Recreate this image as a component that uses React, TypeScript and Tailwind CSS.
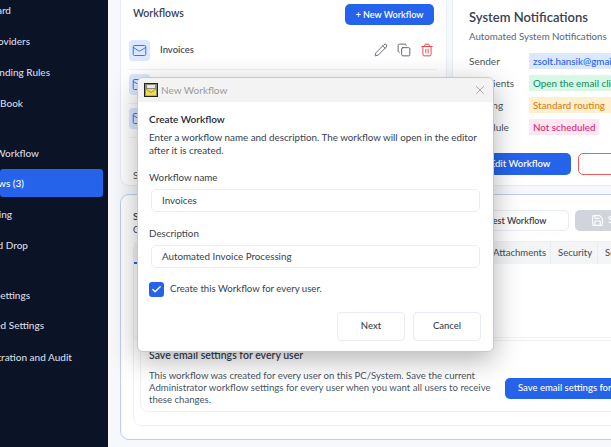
import { Check, Copy, Mail, Pencil, Save, Trash2, X } from 'lucide-react';

const font = { fontFamily: 'Lato, sans-serif' };

const sidebarItems = [
    { label: 'Dashboard', pad: 'pr-[92px]', top: 'mt-0' },
    { label: 'Email Providers', pad: 'pr-[73px]', top: 'mt-[15px]' },
    { label: 'Sending Rules', pad: 'pr-[53px]', top: 'mt-[15px]' },
    { label: 'Address Book', pad: 'pr-[80px]', top: 'mt-[15px]' },
    { label: 'New Workflow', pad: 'pr-[64px]', top: 'mt-[34px]' },
    { label: 'Workflows (3)', pad: 'pr-[79px]', top: 'mt-[8px]', active: true },
    { label: 'Scheduling', pad: 'pr-[91px]', top: 'mt-[9px]' },
    { label: 'Drag and Drop', pad: 'pr-[75px]', top: 'mt-[15px]' },
    { label: 'Settings', pad: 'pr-[73px]', top: 'mt-[34px]' },
    { label: 'Advanced Settings', pad: 'pr-[59px]', top: 'mt-[14px]' },
    { label: 'Administration and Audit', pad: 'pr-[31px]', top: 'mt-[16px]' },
];

const Sidebar = () => (
    <div className="w-[108px] shrink-0 overflow-hidden bg-[#0b1426] pt-[2px] pr-[5px] text-[10px] font-medium text-[#d5dbe6]">
        {sidebarItems.map((item) => (
            <div
                key={item.label}
                className={`flex justify-end whitespace-nowrap rounded-[3px] leading-[16px] ${item.top} ${item.pad} ${
                    item.active ? 'bg-[#2563eb] py-[6px] text-white' : ''
                }`}
            >
                {item.label}
            </div>
        ))}
    </div>
);

const WorkflowRow = ({ name }: { name: string }) => (
    <div className="flex h-[34px] items-center border-b border-[#f0f2f6] pb-[5px]">
        <div className="flex h-[21px] w-[21px] items-center justify-center rounded-[4px] bg-[#dbe8fe]">
            <Mail size={15} className="text-[#3b74f0]" strokeWidth={1.6} />
        </div>
        <span className="ml-[10px] flex-1 pt-[1px] text-[9.5px] font-medium text-[#374151]">{name}</span>
        <div className="flex items-center gap-[9px] pr-[3px]">
            <Pencil size={14} strokeWidth={1.5} className="text-[#4b5563]" />
            <Copy size={14} strokeWidth={1.5} className="text-[#4b5563]" />
            <Trash2 size={14} strokeWidth={1.6} className="text-[#e53e3e]" />
        </div>
    </div>
);

const WorkflowsCard = () => (
    <div className="h-[214px] w-[327px] shrink-0 rounded-b-[9px] border border-[#e8ecf4] bg-white px-[8px] pt-[31px]">
        <div className="flex items-start justify-between pl-[4px] pr-[4px]">
            <span className="text-[10.5px] leading-[18px] font-semibold text-[#374151]">Workflows</span>
            <button className="h-[21px] w-[89px] rounded-[5px] bg-[#2563eb] text-[9px] font-semibold text-white">
                + New Workflow
            </button>
        </div>
        <div className="mt-[11px] w-[308px]">
            <WorkflowRow name="Invoices" />
            <WorkflowRow name="Reports" />
            <WorkflowRow name="Orders" />
        </div>
        <div className="mt-[30px] pl-[4px] text-[10px] text-[#4b5563]">Select a workflow</div>
    </div>
);

const notifications = [
    { label: 'Sender', value: 'zsolt.hansik@gmail.com', tone: 'bg-[#dbe8fe] text-[#2563eb]' },
    { label: 'Recipients', value: 'Open the email client', tone: 'bg-[#d9f7e6] text-[#15935f]' },
    { label: 'Routing', value: 'Standard routing', tone: 'bg-[#fef0cf] text-[#dd7f18] pr-[30px]' },
    { label: 'Schedule', value: 'Not scheduled', tone: 'bg-[#fde7f1] text-[#db2777]' },
];

const NotificationsCard = () => (
    <div className="h-[214px] w-[260px] shrink-0 rounded-b-[9px] border border-[#e8ecf4] bg-white pl-[16px] pt-[34px]">
        <div className="text-[13px] leading-[20px] font-semibold text-[#374151]">System Notifications</div>
        <div className="mt-[1px] whitespace-nowrap text-[9.7px] leading-[16px] text-[#5b6472]">
            Automated System Notifications
        </div>
        <div className="mt-[9px] flex flex-col gap-[6px]">
            {notifications.map((n) => (
                <div key={n.label} className="flex items-center">
                    <span className="w-[60px] text-[10px] text-[#4b5563]">{n.label}</span>
                    <span className={`h-[16px] whitespace-nowrap px-[4px] text-[9.8px] leading-[16px] font-medium ${n.tone}`}>
                        {n.value}
                    </span>
                </div>
            ))}
        </div>
        <div className="mt-[18px] flex gap-[7px]">
            <button className="h-[22px] w-[102px] rounded-[5px] bg-[#2563eb] text-[9.5px] font-semibold text-white">
                Edit Workflow
            </button>
            <button className="flex h-[22px] w-[80px] items-center justify-center rounded-[5px] border border-[#ef5b5b] bg-white">
                <Trash2 size={13} className="text-[#e53e3e]" />
            </button>
        </div>
    </div>
);

const EditorCard = () => (
    <div className="mt-[8px] h-[246px] w-[526px] rounded-[9px] border border-[#bccff6] bg-white pl-[12px] pt-[15px]">
        <div className="flex h-[26px] items-start justify-between">
            <div className="text-[10px] leading-[13px] text-[#374151]">
                <div className="font-semibold">System</div>
                <div className="text-[9px]">Configure</div>
            </div>
            <div className="flex gap-[6px]">
                <button className="h-[21px] w-[100px] rounded-[5px] border border-[#e8ecf4] bg-white pr-[3px] text-[9px] font-semibold text-[#374151]">
                    Test Workflow
                </button>
                <button className="flex h-[21px] w-[70px] items-center gap-[4px] rounded-[5px] bg-[#d1d5db] pl-[16px] text-[9.5px] font-semibold text-white">
                    <Save size={13} />
                    Save
                </button>
            </div>
        </div>
        <div className="mt-[5px] h-[185px] w-[520px] rounded-[8px] border border-[#eef0f5]">
            <div className="flex h-[22px] items-center bg-[#f4f5f7] text-[9.5px] font-medium text-[#4b5563]">
                <span className="h-[22px] w-[60px] border-b-2 border-[#2563eb] pt-[4px] pl-[10px]">General</span>
                <span className="ml-[299px] w-[57px]">Attachments</span>
                <span className="w-[47px] border-l border-[#e8ecf4] pl-[7px] leading-[22px]">Security</span>
                <span className="w-[35px] border-l border-[#e8ecf4] pl-[7px] leading-[22px]">Send</span>
            </div>
            <div className="h-[74px] border-b border-[#eef0f5]" />
            <div className="ml-[6px] mt-[2px] h-[72px] rounded-b-[8px] border border-[#eef0f5] pl-[8px] pt-[7px]">
                <div className="text-[10.5px] leading-[14px] font-semibold text-[#374151]">
                    Save email settings for every user
                </div>
                <div className="mt-[8px] flex items-center">
                    <p className="w-[356px] shrink-0 pr-[12px] text-[9.6px] leading-[12px] text-[#4b5563]">
                        This workflow was created for every user on this PC/System. Save the current Administrator
                        workflow settings for every user when you want all users to receive these changes.
                    </p>
                    <button className="h-[21px] w-[140px] shrink-0 whitespace-nowrap rounded-[5px] bg-[#2563eb] pl-[13px] text-left text-[9.5px] font-medium text-white">
                        Save email settings for every user
                    </button>
                </div>
            </div>
        </div>
    </div>
);

const Dialog = () => (
    <div className="absolute left-[137px] top-[77px] h-[275px] w-[357px] overflow-hidden rounded-[6px] border border-[#c9c9c9] bg-white shadow-[0_8px_28px_rgba(0,0,0,0.3)]">
        <div className="flex h-[24px] items-center bg-[#f3f3f3] pl-[6px] pr-[6px]">
            <svg width="14" height="14" viewBox="0 0 14 14">
                <rect x="0.5" y="0.5" width="13" height="13" fill="#8c8c7a" stroke="#222" />
                <rect x="2" y="6" width="10" height="6.5" fill="#f0dc5a" />
                <path d="M2 6l5 3.5L12 6" fill="none" stroke="#a8962e" strokeWidth="1" />
                <rect x="3" y="2" width="8" height="3" fill="#e8e8e8" />
            </svg>
            <span className="ml-[3px] flex-1 text-[10px] text-[#9a9a9a]">New Workflow</span>
            <X size={14} strokeWidth={1.2} className="text-[#8a8a8a]" />
        </div>
        <div className="px-[11px] pt-[10px]">
            <div className="text-[10px] leading-[14px] font-semibold text-[#1f2937]">Create Workflow</div>
            <p className="mt-[5px] text-[9.8px] leading-[13px] text-[#374151]">
                Enter a workflow name and description. The workflow will open in the editor after it is created.
            </p>
            <div className="mt-[13px] text-[9.8px] leading-[14px] text-[#374151]">Workflow name</div>
            <div className="ml-[2px] mt-[5px] flex h-[23px] w-[329px] items-center rounded-[5px] border border-[#e8ecf4] pl-[10px] text-[9.8px] text-[#374151]">
                Invoices
            </div>
            <div className="mt-[14px] text-[9.8px] leading-[14px] text-[#374151]">Description</div>
            <div className="ml-[2px] mt-[5px] flex h-[23px] w-[329px] items-center rounded-[5px] border border-[#e8ecf4] pl-[10px] text-[9.8px] text-[#374151]">
                Automated Invoice Processing
            </div>
            <div className="mt-[14px] flex items-center gap-[6px]">
                <div className="flex h-[15px] w-[15px] items-center justify-center rounded-[3px] bg-[#2563eb]">
                    <Check size={11} strokeWidth={3} className="text-white" />
                </div>
                <span className="text-[9.6px] text-[#374151]">Create this Workflow for every user.</span>
            </div>
            <div className="mt-[15px] flex justify-end gap-[8px] pr-[1px]">
                <button className="h-[29px] w-[68px] rounded-[4px] border border-[#e8ecf4] bg-white text-[9.5px] font-medium text-[#374151]">
                    Next
                </button>
                <button className="h-[29px] w-[68px] rounded-[4px] border border-[#e8ecf4] bg-white text-[9.5px] font-medium text-[#374151]">
                    Cancel
                </button>
            </div>
        </div>
    </div>
);

export default function App() {
    return (
        <div className="relative flex h-[447px] w-[611px] overflow-hidden bg-[#f7f8fc]" style={font}>
            <Sidebar />
            <div className="min-w-0 flex-1 pl-[12px]">
                <div className="-mt-[28px] flex gap-[5px]">
                    <WorkflowsCard />
                    <NotificationsCard />
                </div>
                <EditorCard />
            </div>
            <Dialog />
        </div>
    );
}
